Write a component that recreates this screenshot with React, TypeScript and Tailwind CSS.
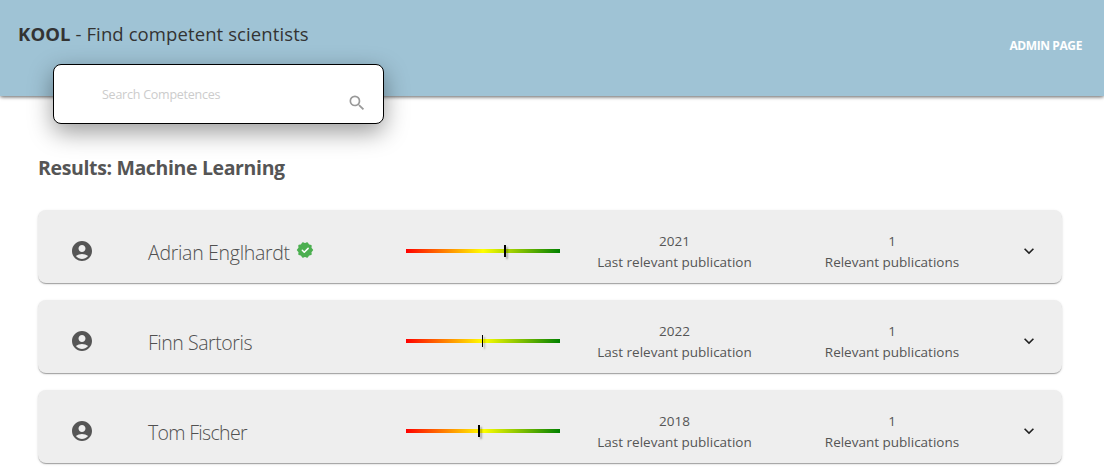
import React from "react";
import { MdAccountCircle, MdExpandMore, MdSearch } from "react-icons/md";

type Scientist = {
  name: string;
  nameSpacing: string;
  verified?: boolean;
  score: number;
  markerWidth: number;
  year: string;
  publications: string;
};

const scientists: Scientist[] = [
  { name: "Adrian Englhardt", nameSpacing: "tracking-[-0.3px]", verified: true, score: 98, markerWidth: 2, year: "2021", publications: "1" },
  { name: "Finn Sartoris", nameSpacing: "tracking-[-0.45px]", score: 76, markerWidth: 1, year: "2022", publications: "1" },
  { name: "Tom Fischer", nameSpacing: "tracking-[-0.68px]", score: 72, markerWidth: 2, year: "2018", publications: "1" },
];

function VerifiedBadge() {
  return (
    <svg viewBox="0 0 24 24" className="size-[18px]" strokeLinecap="round" strokeLinejoin="round">
      <path
        transform="translate(1.44 1.44) scale(0.88)"
        className="fill-[#4caf50] stroke-[#4caf50]"
        strokeWidth="2.6"
        d="M23 12l-2.44-2.79.34-3.69-3.61-.82-1.89-3.2L12 2.96 8.6 1.5 6.71 4.69 3.1 5.5l.34 3.7L1 12l2.44 2.79-.34 3.7 3.61.82L8.6 22.5l3.4-1.47 3.4 1.46 1.89-3.19 3.61-.82-.34-3.69z"
      />
      <path className="fill-none stroke-white" strokeWidth="2" d="M8.4 12.4l2.6 2.6 5.2-5.2" />
    </svg>
  );
}

function ScoreBar({ score, markerWidth }: { score: number; markerWidth: number }) {
  return (
    <div className="relative h-1 w-[154px] bg-[linear-gradient(to_right,red,yellow,green)]">
      <div
        className="absolute -top-1 h-3 bg-black shadow-[2px_2px_2px_rgba(0,0,0,0.3)]"
        style={{ left: score, width: markerWidth }}
      />
    </div>
  );
}

function Fact({ value, label }: { value: string; label: string }) {
  return (
    <div className="flex flex-col items-center text-[13.5px] leading-[21px] whitespace-nowrap text-[#555]">
      <span>{value}</span>
      <span>{label}</span>
    </div>
  );
}

function ResultCard({ person }: { person: Scientist }) {
  return (
    <li className="grid h-[73px] grid-cols-[110px_258px_154px_229px_206px_67px] items-center rounded-lg bg-[#eee] shadow-[0px_2px_1px_-1px_rgba(0,0,0,0.2),0px_1px_1px_0px_rgba(0,0,0,0.14),0px_1px_3px_0px_rgba(0,0,0,0.12)]">
      <MdAccountCircle className="mt-2 ml-8 size-6 text-[#555]" />
      <div className="mt-2.5 flex items-center gap-1.5 text-[19.5px] font-[330] whitespace-nowrap text-[#505050]">
        <span className={`mt-[3px] ${person.nameSpacing}`}>{person.name}</span>
        {person.verified && (
          <span className="mb-[3px]">
            <VerifiedBadge />
          </span>
        )}
      </div>
      <div className="mt-2">
        <ScoreBar score={person.score} markerWidth={person.markerWidth} />
      </div>
      <div className="mt-2.5">
        <Fact value={person.year} label="Last relevant publication" />
      </div>
      <div className="mt-2.5">
        <Fact value={person.publications} label="Relevant publications" />
      </div>
      <button aria-label="Expand" className="mt-[9px] ml-6 size-5">
        <MdExpandMore className="size-5 text-[#222]" />
      </button>
    </li>
  );
}

export default function App() {
  return (
    <div className="h-[475px] overflow-hidden bg-white font-['Open_Sans','Noto_Sans',sans-serif]">
      <header className="flex h-24 items-start justify-between bg-[#9fc3d5] pr-[22px] pl-[18px] shadow-[0px_2px_4px_-1px_rgba(0,0,0,0.4),0px_1px_3px_0px_rgba(0,0,0,0.3)]">
        <h1 className="pt-[21px] text-[18.5px] leading-[26px] font-medium tracking-[0.1px] whitespace-nowrap text-[#333]">
          <b className="font-bold">KOOL</b> - Find competent scientists
        </h1>
        <a className="pt-[36px] text-[12px] leading-[20px] font-bold tracking-[-0.4px] text-white">ADMIN PAGE</a>
      </header>
      <div className="relative -mt-8 ml-[53px] flex h-[60px] w-[331px] items-start justify-between rounded-lg border border-black bg-white pr-4 pl-12 shadow-[0px_8px_24px_rgba(0,0,0,0.4)]">
        <input
          placeholder="Search Competences"
          className="mt-[19px] h-5 w-[200px] text-[12.5px] tracking-[-0.24px] outline-none placeholder:text-[#ccc]"
        />
        <MdSearch className="mt-7 size-5 text-[#999]" />
      </div>
      <main className="pt-[30px] pr-[42px] pl-[38px]">
        <h2 className="text-[19.5px] leading-7 font-bold tracking-[-0.36px] text-[#555]">
          Results: Machine Learning
        </h2>
        <ul className="mt-[28px] flex flex-col gap-[17px]">
          {scientists.map((person) => (
            <ResultCard key={person.name} person={person} />
          ))}
        </ul>
      </main>
    </div>
  );
}
